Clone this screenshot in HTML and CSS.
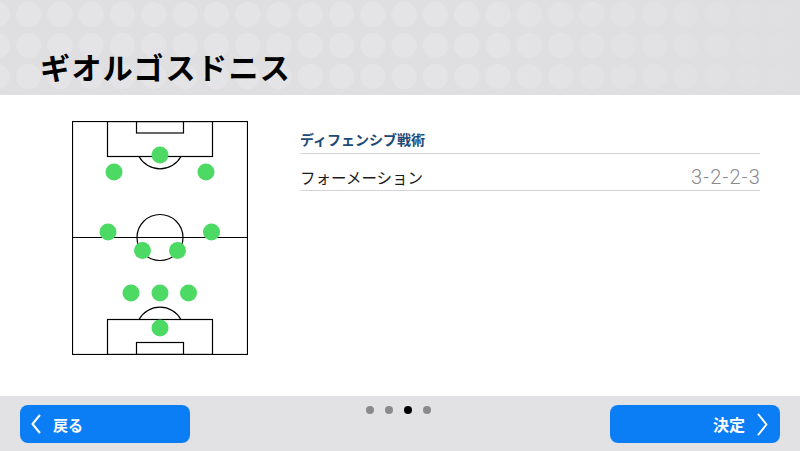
FILE: index.html
```html
<!doctype html>
<html lang="ja">

<head>
  <meta charset="UTF-8">
  <meta name="viewport" content="width=device-width, initial-scale=1.0">
  <title>ギオルゴスドニス</title>
  <link rel="stylesheet" href="styles.css">
</head>

<body>
  <header class="top">
    <h1 class="team-name">ギオルゴスドニス</h1>
  </header>

  <main class="content">
    <div class="pitch">
      <svg width="176" height="234" viewBox="0 0 176 234">
        <g fill="none" stroke="#000" stroke-width="1.2">
          <rect x="0.5" y="0.5" width="175" height="233" />
          <line x1="0" y1="116.5" x2="176" y2="116.5" />
          <circle cx="88" cy="116.5" r="23" />
          <!-- top half -->
          <path d="M67 35.5 A24 24 0 0 0 109 35.5" />
          <rect x="35.5" y="0.5" width="105" height="35" />
          <rect x="64.5" y="0.5" width="47" height="11.5" />
          <!-- bottom half -->
          <path d="M67 198.5 A24 24 0 0 1 109 198.5" />
          <rect x="35.5" y="198.5" width="105" height="35" />
          <rect x="64.5" y="221.5" width="47" height="12" />
        </g>
        <g fill="#4cd964">
          <circle cx="88" cy="34" r="8.5" />
          <circle cx="42" cy="51" r="8.5" />
          <circle cx="134" cy="51" r="8.5" />
          <circle cx="36" cy="111" r="8.5" />
          <circle cx="139.5" cy="111" r="8.5" />
          <circle cx="70.5" cy="129.5" r="8.5" />
          <circle cx="105.5" cy="129.5" r="8.5" />
          <circle cx="59" cy="172" r="8.5" />
          <circle cx="88" cy="172" r="8.5" />
          <circle cx="116.5" cy="172" r="8.5" />
          <circle cx="88" cy="207" r="8.5" />
        </g>
      </svg>
    </div>

    <section class="tactics">
      <h2 class="tactics-title">ディフェンシブ戦術</h2>
      <div class="tactics-row">
        <span class="row-label">フォーメーション</span>
        <span class="row-value">3-2-2-3</span>
      </div>
    </section>
  </main>

  <footer class="bottom">
    <button class="nav-btn back">
      <svg width="10" height="20" viewBox="0 0 10 20">
        <polyline points="8.5,1.5 1.5,10 8.5,18.5" fill="none" stroke="#fff" stroke-width="2" stroke-linecap="round" stroke-linejoin="round" />
      </svg>
      <span>戻る</span>
    </button>

    <div class="pager">
      <span class="dot"></span>
      <span class="dot"></span>
      <span class="dot active"></span>
      <span class="dot"></span>
    </div>

    <button class="nav-btn next">
      <span>決定</span>
      <svg width="11" height="23" viewBox="0 0 11 23">
        <polyline points="1.5,1.5 9.5,11.5 1.5,21.5" fill="none" stroke="#fff" stroke-width="2" stroke-linecap="round" stroke-linejoin="round" />
      </svg>
    </button>
  </footer>
</body>

</html>
```

FILE: styles.css
```css
* {
  box-sizing: border-box;
}

body {
  margin: 0;
  width: 800px;
  height: 451px;
  display: flex;
  flex-direction: column;
  font-family: "Noto Sans CJK JP", "Noto Sans", sans-serif;
  background: #ffffff;
  overflow: hidden;
}

.top {
  height: 95px;
  padding: 0 0 0 40px;
  display: flex;
  align-items: center;
  background-color: #dfdfe1;
  background-image:
    linear-gradient(to right, rgba(223, 223, 225, 0) 60%, rgba(223, 223, 225, 0.9) 100%),
    radial-gradient(circle, #e4e4e6 12px, rgba(228, 228, 230, 0) 13px);
  background-size: 100% 100%, 31.3px 31px;
  background-position: 0 0, 13px -1px;
}

.team-name {
  margin: 36px 0 0 0;
  font-size: 30px;
  font-weight: bold;
  color: #000;
  letter-spacing: 1.4px;
}

.content {
  flex: 1;
  display: flex;
  padding: 26px 40px 0 72px;
}

.pitch svg {
  display: block;
}

.tactics {
  flex: 1;
  margin-left: 52px;
  padding-top: 8px;
}

.tactics-title {
  margin: 0;
  padding-bottom: 4px;
  font-size: 14px;
  font-weight: bold;
  color: #1c4a78;
  border-bottom: 1px solid #d4d4d6;
}

.tactics-row {
  display: flex;
  justify-content: space-between;
  align-items: center;
  height: 37px;
  padding-top: 9px;
  border-bottom: 1px solid #d4d4d6;
}

.row-label {
  font-size: 15.5px;
  color: #1a1a1a;
}

.row-value {
  font-family: Roboto, "Noto Sans", sans-serif;
  font-weight: 300;
  font-size: 20px;
  line-height: 26px;
  color: #8a8a8e;
  letter-spacing: 1.2px;
  margin-right: -1px;
}

.bottom {
  height: 55px;
  padding: 9px 20px 0 20px;
  display: flex;
  align-items: flex-start;
  justify-content: space-between;
  background: #e2e2e4;
}

.nav-btn {
  width: 170px;
  height: 38px;
  display: flex;
  align-items: center;
  gap: 12px;
  border: none;
  border-radius: 8px;
  background: #0b7ef6;
  color: #fff;
  font-family: "Noto Sans CJK JP", sans-serif;
  font-size: 15px;
  font-weight: bold;
}

.nav-btn svg {
  display: block;
}

.back {
  padding-left: 11px;
}

.next {
  justify-content: flex-end;
  padding-right: 12px;
  font-size: 16px;
}

.pager {
  display: flex;
  gap: 11px;
  padding-top: 1px;
  margin-left: 176px;
  margin-right: auto;
}

.dot {
  width: 8px;
  height: 8px;
  border-radius: 50%;
  background: #8a8a8c;
}

.dot.active {
  background: #000;
}
```
